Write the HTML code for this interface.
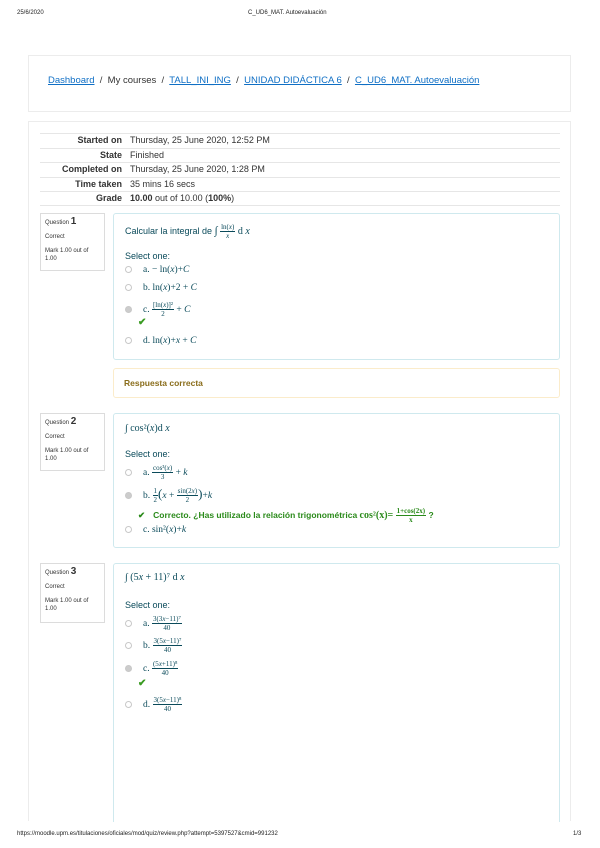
<!DOCTYPE html>
<html style="overflow:hidden;width:600px;height:848px"><head><meta charset="utf-8"><style>
*{margin:0;padding:0;box-sizing:border-box}
body{width:600px;height:848px;background:#fff;position:relative;overflow:hidden;font-family:"Liberation Sans",sans-serif;color:#333}
.a{position:absolute}
.hdr{font-size:6px;color:#222}
.box{border:1px solid #ececec}
.bc{font-size:9.5px;color:#333}
.bc a{color:#0f6fc5;text-decoration:underline}
.row{position:absolute;left:40px;width:520px;height:14.5px;border-top:1px solid #e6e6e6;font-size:9px;line-height:13px}
.row .l{position:absolute;right:438px;font-weight:bold;color:#333;white-space:nowrap}
.row .v{position:absolute;left:90px;white-space:nowrap}
.info{position:absolute;left:40px;width:65px;border:1px solid #dcdcdc;background:#fff;font-size:6px;color:#333;padding:4px 4px}
.info b{font-size:10px}
.info p{margin-bottom:6px;line-height:8px}
.q{position:absolute;left:113px;width:447px;border:1px solid #cfe9ee;border-radius:3px;background:#fff;color:#0a4a5a}
.m{font-family:"Liberation Serif",serif}
.i{font-style:italic}
.so{position:absolute;left:11px;font-size:9px}
.opt{position:absolute;left:11px;font-size:9.5px;white-space:nowrap}
.rad{display:inline-block;width:7px;height:7px;border:1px solid #c8c8c8;border-radius:50%;vertical-align:middle;margin-right:11px;background:#fff}
.rad.s{background:#ccc}
.fr{display:inline-block;vertical-align:middle;text-align:center;font-size:7px;line-height:8px;font-family:"Liberation Serif",serif}
.fr .n{border-bottom:0.7px solid #0a4a5a;padding:0 1px}
.ck{position:absolute;color:#3a9b22;font-size:10px;font-weight:bold}
</style></head><body>
<div class="a hdr" style="left:17px;top:10px">25/6/2020</div>
<div class="a hdr" style="left:248px;top:10px">C_UD6_MAT. Autoevaluación</div>

<div class="a box" style="left:28px;top:55px;width:543px;height:57px"></div>
<div class="a bc" style="left:48px;top:75px">
<a>Dashboard</a> &nbsp;/&nbsp; My courses &nbsp;/&nbsp; <a>TALL_INI_ING</a> &nbsp;/&nbsp; <a>UNIDAD DIDÁCTICA 6</a> &nbsp;/&nbsp; <a>C_UD6_MAT. Autoevaluación</a></div>

<div class="a" style="left:28px;top:121px;width:543px;height:700px;border:1px solid #ececec;border-bottom:none"></div>

<div class="row" style="top:133px"><span class="l">Started on</span><span class="v">Thursday, 25 June 2020, 12:52 PM</span></div>
<div class="row" style="top:147.5px"><span class="l">State</span><span class="v">Finished</span></div>
<div class="row" style="top:162px"><span class="l">Completed on</span><span class="v">Thursday, 25 June 2020, 1:28 PM</span></div>
<div class="row" style="top:176.5px"><span class="l">Time taken</span><span class="v">35 mins 16 secs</span></div>
<div class="row" style="top:191px;border-bottom:1px solid #e6e6e6"><span class="l">Grade</span><span class="v"><b>10.00</b> out of 10.00 (<b>100%</b>)</span></div>

<!-- Q1 -->
<div class="info" style="top:213px;height:58px"><p>Question <b>1</b></p><p>Correct</p><p>Mark 1.00 out of 1.00</p></div>
<div class="q" style="top:213px;height:147px">
 <div class="a" style="left:11px;top:9px;font-size:9px;white-space:nowrap">Calcular la integral de <span class="m" style="font-size:11px">∫</span> <span class="fr"><div class="n">ln(<i>x</i>)</div><div class="i">x</div></span> <span class="m" style="font-size:10px">d <i>x</i></span></div>
 <div class="so" style="top:37px">Select one:</div>
 <div class="opt" style="top:50px"><span class="rad"></span><span class="m">a. − ln(<i>x</i>)+<i>C</i></span></div>
 <div class="opt" style="top:68px"><span class="rad"></span><span class="m">b. ln(<i>x</i>)+2 + <i>C</i></span></div>
 <div class="opt" style="top:87px"><span class="rad s"></span><span class="m">c. </span><span class="fr"><div class="n">[ln(<i>x</i>)]²</div><div>2</div></span><span class="m"> + <i>C</i></span></div>
 <div class="ck" style="left:24px;top:103px">✔</div>
 <div class="opt" style="top:121px"><span class="rad"></span><span class="m">d. ln(<i>x</i>)+<i>x</i> + <i>C</i></span></div>
</div>
<div class="a" style="left:113px;top:368px;width:447px;height:30px;border:1px solid #fbeccb;border-radius:3px;color:#8a6d1b;font-size:8.5px;font-weight:bold;padding:9px 10px">Respuesta correcta</div>

<!-- Q2 -->
<div class="info" style="top:413px;height:58px"><p>Question <b>2</b></p><p>Correct</p><p>Mark 1.00 out of 1.00</p></div>
<div class="q" style="top:413px;height:135px">
 <div class="a m" style="left:11px;top:9px;font-size:10px;white-space:nowrap">∫ cos²(<i>x</i>)d <i>x</i></div>
 <div class="so" style="top:35px">Select one:</div>
 <div class="opt" style="top:50px"><span class="rad"></span><span class="m">a. </span><span class="fr"><div class="n">cos³(<i>x</i>)</div><div>3</div></span><span class="m"> + <i>k</i></span></div>
 <div class="opt" style="top:72px"><span class="rad s"></span><span class="m">b. </span><span class="fr"><div class="n">1</div><div>2</div></span><span class="m" style="font-size:13px">(</span><span class="m"><i>x</i> + </span><span class="fr"><div class="n">sin(2<i>x</i>)</div><div>2</div></span><span class="m" style="font-size:13px">)</span><span class="m">+<i>k</i></span></div>
 <div class="a" style="left:24px;top:93px;font-size:8.5px;font-weight:bold;color:#2a8a1a;white-space:nowrap"><span style="margin-right:8px">✔</span>Correcto. ¿Has utilizado la relación trigonométrica <span class="m" style="font-size:10px">cos²(x)=</span> <span class="fr" style="font-weight:bold"><div class="n" style="border-color:#2a8a1a">1+cos(2x)</div><div>x</div></span> ?</div>
 <div class="opt" style="top:110px"><span class="rad"></span><span class="m">c. sin²(<i>x</i>)+<i>k</i></span></div>
</div>

<!-- Q3 -->
<div class="info" style="top:563px;height:60px"><p>Question <b>3</b></p><p>Correct</p><p>Mark 1.00 out of 1.00</p></div>
<div class="q" style="top:563px;height:270px;border-bottom:none">
 <div class="a m" style="left:11px;top:8px;font-size:10px;white-space:nowrap">∫ (5<i>x</i> + 11)⁷ d <i>x</i></div>
 <div class="so" style="top:36px">Select one:</div>
 <div class="opt" style="top:51px"><span class="rad"></span><span class="m">a. </span><span class="fr"><div class="n">3(3<i>x</i>−11)⁷</div><div>40</div></span></div>
 <div class="opt" style="top:73px"><span class="rad"></span><span class="m">b. </span><span class="fr"><div class="n">3(5<i>x</i>−11)⁷</div><div>40</div></span></div>
 <div class="opt" style="top:96px"><span class="rad s"></span><span class="m">c. </span><span class="fr"><div class="n">(5<i>x</i>+11)⁸</div><div>40</div></span></div>
 <div class="ck" style="left:24px;top:114px">✔</div>
 <div class="opt" style="top:132px"><span class="rad"></span><span class="m">d. </span><span class="fr"><div class="n">3(5<i>x</i>−11)⁸</div><div>40</div></span></div>
</div>

<div class="a" style="left:0;top:822px;width:600px;height:26px;background:#fff"></div>
<div class="a hdr" style="left:17px;top:831px">https://moodle.upm.es/titulaciones/oficiales/mod/quiz/review.php?attempt=5397527&amp;cmid=991232</div>
<div class="a hdr" style="left:573px;top:831px">1/3</div>
</body></html>
